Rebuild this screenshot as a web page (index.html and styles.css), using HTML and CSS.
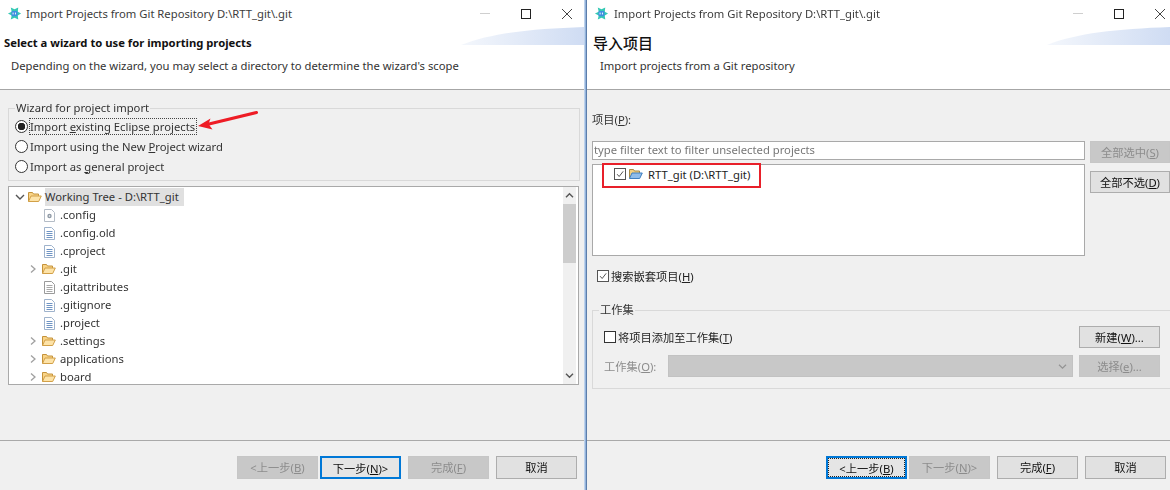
FILE: index.html
```html
<!DOCTYPE html>
<html lang="zh">
<head>
<meta charset="utf-8">
<title>Import Projects from Git Repository</title>
<link rel="stylesheet" href="styles.css">
</head>
<body>
<svg class="defs" width="0" height="0" aria-hidden="true">
  <defs>
    <linearGradient id="sw" x1="0" x2="1" y1="0" y2="0"><stop offset="0" stop-color="#f4f7fc"/><stop offset="1" stop-color="#cfdcf3"/></linearGradient>
    <symbol id="logo" viewBox="0 0 16 16">
      <path d="M1 8 5 6 4 1.500 8 3.500 12 1.500 11.500 6 15 8 11.500 10 12 14.500 8 12.500 4 14.500 5 10Z" fill="#35c9b4"/>
      <rect x="4.800" y="5.200" width="6.400" height="5.600" rx="1" fill="#3f8fe0"/>
      <path d="M6.500 7v2M9 7v2" stroke="#fff" stroke-width="1"/>
    </symbol>
    <symbol id="folder" viewBox="0 0 14 12">
      <path d="M.5 10.500V1.500h4l1 1.500h5v2" fill="#f9d487" stroke="#c4923a"/>
      <path d="M.5 10.500 3 5h10.300l-2.600 5.500Z" fill="#fde3a8" stroke="#d2a048"/>
    </symbol>
    <symbol id="folderblue" viewBox="0 0 14 12">
      <path d="M.5 10.500V1.500h4l1 1.500h5v2" fill="#f3cf80" stroke="#a98a45"/>
      <path d="M.5 10.500 3 5h10.300l-2.600 5.500Z" fill="#8fbcea" stroke="#3f7fc0"/>
    </symbol>
    <symbol id="file" viewBox="0 0 11 13">
      <path d="M.5.500h7l3 3v9H.500Z" fill="#fff" stroke="#9fb3cc"/>
      <path d="M2.500 4.500h6M2.500 6.500h6M2.500 8.500h6M2.500 10.500h6" stroke="#6f94c4"/>
    </symbol>
    <symbol id="plain" viewBox="0 0 11 13">
      <path d="M.5.500h7l3 3v9H.500Z" fill="#fff" stroke="#9a9a9a"/>
      <path d="M2.500 4.500h6M2.500 6.500h6M2.500 8.500h6M2.500 10.500h6" stroke="#a8a8a8"/>
    </symbol>
    <symbol id="gear" viewBox="0 0 11 13">
      <path d="M.5.500h7l3 3v9H.500Z" fill="#fff" stroke="#b4bcc6"/>
      <circle cx="5.500" cy="7" r="2.200" fill="#8f9aa6"/>
      <circle cx="5.500" cy="7" r=".8" fill="#fff"/>
    </symbol>
    <symbol id="chev" viewBox="0 0 8 10"><path d="M2 1.500 6 5 2 8.500" fill="none" stroke="#a0a0a0" stroke-width="1.300"/></symbol>
    <symbol id="chevd" viewBox="0 0 10 8"><path d="M1 2 5 6 9 2" fill="none" stroke="#555" stroke-width="1.400"/></symbol>
    <symbol id="check" viewBox="0 0 12 12"><path d="M2.500 6.200 5 9 9.800 2.800" fill="none" stroke="#555" stroke-width="1.200"/></symbol>
  </defs>
</svg>
<main class="screen">
  <section class="wizard wizard-left">
    <header class="titlebar">
      <svg class="logo"><use href="#logo"/></svg>
      <span class="title">Import Projects from Git Repository D:\RTT_git\.git</span>
      <span class="win-controls">
        <i class="win-min"></i>
        <i class="win-max"></i>
        <svg class="win-close" viewBox="0 0 10 10"><path d="M0 0 10 10M10 0 0 10" stroke="#444" stroke-width="1"/></svg>
      </span>
    </header>
    <div class="banner">
      <svg class="swoosh" viewBox="0 0 124 18" preserveAspectRatio="none"><path d="M0 18C30 6 70 2 124 0V18Z" fill="url(#sw)"/></svg>
      <h1 class="banner-title banner-title-en">Select a wizard to use for importing projects</h1>
      <p class="banner-sub banner-sub-left">Depending on the wizard, you may select a directory to determine the wizard's scope</p>
    </div>
    <div class="body body-left">
      <fieldset class="group group-left">
        <legend>Wizard for project import</legend>
        <div class="radio-row"><i class="radio radio-on"></i><span class="focus-label">Import <u>e</u>xisting Eclipse projects</span></div>
        <div class="radio-row"><i class="radio"></i><span>Import using the New <u>P</u>roject wizard</span></div>
        <div class="radio-row"><i class="radio"></i><span>Import as <u>g</u>eneral project</span></div>
      </fieldset>
      <svg class="arrow" viewBox="0 0 62 22"><path d="M59.500 2.500 12 14" fill="none" stroke="#ee1c25" stroke-width="3" stroke-linecap="round"/><path d="M1 16 13.500 8.500 11.500 14 15.500 19.500Z" fill="#ee1c25"/></svg>
      <div class="tree">
        <div class="tree-rows">
          <div class="row row-root"><svg class="chev-d"><use href="#chevd"/></svg><svg class="ico-folder"><use href="#folder"/></svg><span class="selected">Working Tree - D:\RTT_git</span></div>
          <div class="row row-leaf"><svg class="ico-file"><use href="#gear"/></svg><span>.config</span></div>
          <div class="row row-leaf"><svg class="ico-file"><use href="#file"/></svg><span>.config.old</span></div>
          <div class="row row-leaf"><svg class="ico-file"><use href="#file"/></svg><span>.cproject</span></div>
          <div class="row row-dir"><svg class="chev"><use href="#chev"/></svg><svg class="ico-folder"><use href="#folder"/></svg><span>.git</span></div>
          <div class="row row-leaf"><svg class="ico-file"><use href="#plain"/></svg><span>.gitattributes</span></div>
          <div class="row row-leaf"><svg class="ico-file"><use href="#file"/></svg><span>.gitignore</span></div>
          <div class="row row-leaf"><svg class="ico-file"><use href="#file"/></svg><span>.project</span></div>
          <div class="row row-dir"><svg class="chev"><use href="#chev"/></svg><svg class="ico-folder"><use href="#folder"/></svg><span>.settings</span></div>
          <div class="row row-dir"><svg class="chev"><use href="#chev"/></svg><svg class="ico-folder"><use href="#folder"/></svg><span>applications</span></div>
          <div class="row row-dir"><svg class="chev"><use href="#chev"/></svg><svg class="ico-folder"><use href="#folder"/></svg><span>board</span></div>
        </div>
        <div class="scrollbar">
          <svg class="sb-arrow" viewBox="0 0 10 8"><path d="M1 6 5 2 9 6" fill="none" stroke="#555" stroke-width="1.600"/></svg>
          <div class="sb-thumb"></div>
          <div class="sb-track"></div>
          <svg class="sb-arrow" viewBox="0 0 10 8"><path d="M1 2 5 6 9 2" fill="none" stroke="#555" stroke-width="1.600"/></svg>
        </div>
      </div>
    </div>
    <footer class="footer footer-left">
      <button class="btn btn-off">&lt;上一步(<u>B</u>)</button>
      <button class="btn btn-default btn-near">下一步(<u>N</u>)&gt;</button>
      <button class="btn btn-off btn-gap">完成(<u>F</u>)</button>
      <button class="btn btn-gap">取消</button>
    </footer>
  </section>
  <div class="divider"></div>
  <section class="wizard wizard-right">
    <header class="titlebar">
      <svg class="logo"><use href="#logo"/></svg>
      <span class="title">Import Projects from Git Repository D:\RTT_git\.git</span>
      <span class="win-controls">
        <i class="win-min"></i>
        <i class="win-max"></i>
        <svg class="win-close" viewBox="0 0 10 10"><path d="M0 0 10 10M10 0 0 10" stroke="#444" stroke-width="1"/></svg>
      </span>
    </header>
    <div class="banner">
      <svg class="swoosh" viewBox="0 0 124 18" preserveAspectRatio="none"><path d="M0 18C30 6 70 2 124 0V18Z" fill="url(#sw)"/></svg>
      <h1 class="banner-title banner-title-zh">导入项目</h1>
      <p class="banner-sub banner-sub-right">Import projects from a Git repository</p>
    </div>
    <div class="body body-right">
      <div class="label-projects">项目(<u>P</u>):</div>
      <div class="projects">
        <div class="projects-main">
          <div class="filter">type filter text to filter unselected projects</div>
          <div class="list">
            <div class="list-item">
              <i class="check"><svg><use href="#check"/></svg></i>
              <svg class="ico-folder"><use href="#folderblue"/></svg>
              <span>RTT_git (D:\RTT_git)</span>
            </div>
            <div class="red-box"></div>
          </div>
        </div>
        <div class="projects-side">
          <button class="btn btn-off btn-side">全部选中(<u>S</u>)</button>
          <button class="btn btn-side">全部不选(<u>D</u>)</button>
        </div>
      </div>
      <div class="nested"><i class="check"><svg><use href="#check"/></svg></i><span>搜索嵌套项目(<u>H</u>)</span></div>
      <fieldset class="group group-right">
        <legend>工作集</legend>
        <div class="ws-row">
          <i class="check check-empty"></i><span class="ws-label">将项目添加至工作集(<u>T</u>)</span>
          <button class="btn btn-ws">新建(<u>W</u>)...</button>
        </div>
        <div class="ws-row ws-row2">
          <span class="ws-name">工作集(<u>O</u>):</span>
          <div class="combo"><svg><use href="#chevd"/></svg></div>
          <button class="btn btn-off btn-ws">选择(<u>e</u>)...</button>
        </div>
      </fieldset>
    </div>
    <footer class="footer footer-right">
      <button class="btn btn-default">&lt;上一步(<u>B</u>)</button>
      <button class="btn btn-off btn-near">下一步(<u>N</u>)&gt;</button>
      <button class="btn btn-gap">完成(<u>F</u>)</button>
      <button class="btn btn-gap">取消</button>
    </footer>
  </section>
</main>
</body>
</html>
```

FILE: styles.css
```css
* { box-sizing: border-box; }
html, body { margin: 0; padding: 0; background: #f0f0f0; }
body { width: 1170px; height: 490px; overflow: hidden; font-family: "Noto Sans", "Noto Sans CJK SC", sans-serif; font-size: 11.25px; color: #222; }
.defs { display: block; width: 0; height: 0; }
i { display: block; font-style: normal; }
u { text-underline-offset: 1px; }

.screen { display: flex; width: 1170px; height: 490px; overflow: hidden; filter: blur(.35px); }
.wizard { display: flex; flex-direction: column; height: 490px; background: #f0f0f0; }
.wizard-left { width: 584px; }
.wizard-right { width: 583px; }
.divider { width: 3px; height: 490px; background: linear-gradient(90deg, #d3e2f4, #86a9d6 60%, #3f5f8c); }

.titlebar { display: flex; align-items: center; height: 27px; background: #fff; padding-left: 7px; }
.logo { width: 15px; height: 15px; flex: none; }
.title { margin-left: 4px; color: #3c3c3c; white-space: nowrap; }
.wizard-right .title { margin-left: 5px; }
.win-controls { display: flex; align-items: center; margin-left: auto; }
.win-min { width: 10px; height: 1px; background: #cfcfcf; }
.win-max { width: 10px; height: 10px; border: 1px solid #222; margin-left: 31px; }
.win-close { width: 10px; height: 10px; margin-left: 31px; margin-right: 12px; }
.wizard-right .win-close { margin-right: 5px; }

.banner { position: relative; height: 63px; background: #fff; border-bottom: 1px solid #a6a6a6; }
.swoosh { position: absolute; top: 0; right: 0; width: 123px; height: 18px; }
.banner-title { margin: 0; font-weight: 700; color: #111; white-space: nowrap; }
.banner-title-en { font-size: 11.25px; line-height: 16px; padding: 8px 0 0 4px; }
.banner-title-zh { font-size: 15px; line-height: 18px; padding: 7px 0 0 6px; font-weight: 500; }
.banner-sub { margin: 0; line-height: 16px; color: #333; white-space: nowrap; }
.banner-sub-left { padding: 7px 0 0 11px; }
.banner-sub-right { padding: 6px 0 0 13px; }

.body { flex: 1; min-height: 0; position: relative; }
.body-left { padding: 11px 5px 0 8px; }
.group { margin: 0; min-width: 0; border: 1px solid #d9d9d9; }
.group legend { padding: 0 1px; line-height: 14px; color: #333; white-space: nowrap; }
.group-left { height: 80px; width: 572px; padding: 1px 0 0 6px; }
.radio-row { display: flex; align-items: center; height: 20px; gap: 2px; color: #333; }
.radio { width: 13px; height: 13px; border: 1px solid #333; border-radius: 50%; background: #fff; flex: none; }
.radio-on { background: radial-gradient(circle, #222 0 3.5px, #fff 4px); }
.focus-label { outline: 1px dotted #444; padding: 0 1px 0 0; }
.arrow { position: absolute; left: 197px; top: 20px; width: 62px; height: 22px; }

.tree { display: flex; width: 571px; height: 199px; margin-top: 5px; background: #fff; border: 1px solid #a9a9a9; overflow: hidden; }
.tree-rows { flex: 1; min-width: 0; }
.row { display: flex; align-items: center; height: 18px; color: #333; white-space: nowrap; }
.row > span { margin-bottom: 2px; }
.row-root { padding-left: 6px; height: 19px; }
.row-root > .selected { margin-bottom: 0; }
.row-leaf { padding-left: 35px; }
.row-dir { padding-left: 20px; }
.chev-d { width: 10px; height: 8px; flex: none; }
.chev { width: 8px; height: 10px; flex: none; margin-right: 5px; }
.ico-folder { width: 14px; height: 12px; flex: none; }
.ico-file { width: 11px; height: 13px; flex: none; margin-right: 5px; }
.row-root .ico-folder { margin-left: 3px; margin-right: 3px; }
.row-dir .ico-folder { margin-right: 4px; }
.selected { background: #e0e0e0; line-height: 18px; padding-right: 5px; }
.scrollbar { display: flex; flex-direction: column; align-items: center; width: 13px; margin-right: 2px; background: #f0f0f0; }
.sb-arrow { width: 9px; height: 7px; margin: 5px 0; flex: none; }
.sb-thumb { width: 13px; height: 59px; background: #cdcdcd; flex: none; }
.sb-track { flex: 1; }

.footer { display: flex; height: 50px; border-top: 1px solid #a9a9a9; padding-top: 15px; }
.footer-left { padding-left: 237px; }
.footer-right { padding-left: 239px; }
.btn { width: 81px; height: 23px; padding: 0; border: 1px solid #adadad; background: #e1e1e1; color: #111; font: inherit; line-height: 21px; white-space: nowrap; }
.btn-off { border-color: #c6c6c6; background: #c8c8c8; color: #8c8c8c; }
.btn-default { border: 2px solid #0078d7; background: #e5e5e5; outline: 1px dotted #222; outline-offset: -3px; }
.footer-left .btn-default { outline: 0; }
.btn-near { margin-left: 2px; }
.btn-gap { margin-left: 7px; }

.body-right { padding: 22px 0 0 5px; }
.label-projects { line-height: 16px; color: #333; }
.projects { display: flex; margin-top: 13px; }
.projects-main { width: 493px; flex: none; }
.filter { height: 19px; background: #fff; border: 1px solid #a9a9a9; color: #777; line-height: 15px; padding-left: 1px; white-space: nowrap; }
.list { position: relative; height: 92px; margin-top: 4px; background: #fff; border: 1px solid #a9a9a9; }
.list-item { display: flex; align-items: center; height: 18px; padding: 0 0 0 21px; color: #222; white-space: nowrap; }
.list-item .ico-folder { margin: 0 5px 0 3px; }
.red-box { position: absolute; left: 9px; top: -2px; width: 159px; height: 25px; border: 2px solid #e8202a; }
.check { display: block; width: 12px; height: 12px; border: 1px solid #555; background: #fff; flex: none; }
.check svg { display: block; width: 10px; height: 10px; }
.check-empty { border-color: #333; }
.projects-side { display: flex; flex-direction: column; margin-left: 5px; gap: 8px; }
.btn-side { width: 80px; height: 22px; }
.nested { display: flex; align-items: center; gap: 2px; height: 16px; margin: 12px 0 0 5px; color: #222; white-space: nowrap; }
.group-right { width: 578px; height: 86px; margin-top: 19px; padding: 9px 10px 0 11px; border-right: 0; }
.group-right legend { margin-left: -5px; }
.ws-row { display: flex; align-items: center; height: 22px; }
.ws-row2 { margin-top: 7px; }
.ws-label { margin-left: 2px; color: #222; white-space: nowrap; }
.ws-name { width: 64px; color: #8c8c8c; white-space: nowrap; flex: none; }
.btn-ws { margin-left: auto; height: 22px; }
.combo { display: flex; align-items: center; justify-content: flex-end; width: 405px; height: 22px; background: #c8c8c8; border: 1px solid #c2c2c2; padding-right: 5px; }
.combo svg { width: 9px; height: 7px; opacity: .45; }
```
